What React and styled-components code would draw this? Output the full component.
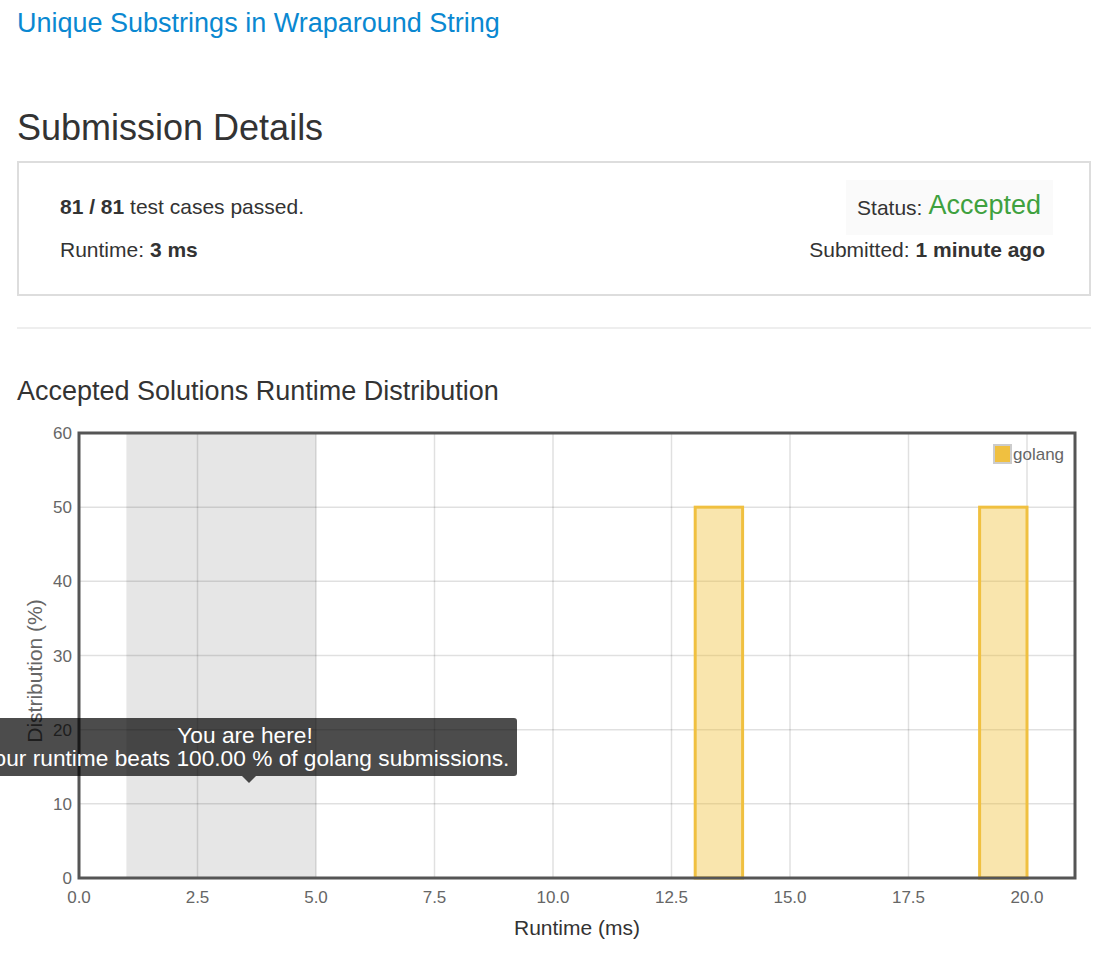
import React from "react";
import styled, { createGlobalStyle } from "styled-components";

const GlobalStyle = createGlobalStyle`
  body {
    margin: 0;
    background: #fff;
    color: #333;
    font-family: "Liberation Sans", Arial, sans-serif;
  }
`;

const Page = styled.div`
  padding: 0 17px;
  width: 1074px;
`;

const TitleLink = styled.a`
  display: block;
  padding-top: 6px;
  font-size: 27px;
  line-height: 34px;
  color: #0a88d1;
  text-decoration: none;
`;

const Heading = styled.h2`
  margin: 66px 0 11px;
  font-size: 36px;
  font-weight: 400;
  line-height: 44px;
`;

const Panel = styled.div`
  display: flex;
  justify-content: space-between;
  border: 2px solid #ddd;
  height: 131px;
  padding: 0 44px 0 41px;
`;

const Col = styled.div`
  display: flex;
  flex-direction: column;
  align-items: ${(p) => (p.right ? "flex-end" : "flex-start")};
  padding-top: ${(p) => (p.right ? "17px" : "32px")};
`;

const Line = styled.div`
  font-size: 21px;
  line-height: 24px;
  margin-bottom: ${(p) => p.gap || "0"};
  b { font-weight: 700; }
`;

const StatusBox = styled.div`
  background: #fafafa;
  padding: 0 12px 0 11px;
  margin-right: -8px;
  height: 55px;
  display: flex;
  align-items: center;
  font-size: 21px;
  margin-bottom: 3px;
`;

const Accepted = styled.span`
  color: #3fa13f;
  font-size: 27px;
  margin-left: 6px;
  position: relative;
  top: -2px;
`;

const Divider = styled.hr`
  border: none;
  border-top: 2px solid #eee;
  margin: 31px 0 0;
`;

const ChartTitle = styled.h3`
  margin: 45px 0 0;
  font-size: 27px;
  font-weight: 400;
  line-height: 34px;
`;

const ChartWrap = styled.div`
  position: relative;
  margin-top: 8px;
  height: 538px;
  svg { display: block; }
`;

const Tooltip = styled.div`
  position: absolute;
  left: -44px;
  top: 302px;
  width: 544px;
  height: 58px;
  background: rgba(0, 0, 0, 0.7);
  border-radius: 3px;
  color: #fff;
  font-size: 22.7px;
  line-height: 23px;
  text-align: center;
  padding-top: 6px;
  box-sizing: border-box;
  white-space: nowrap;
  &::after {
    content: "";
    position: absolute;
    left: 269px;
    bottom: -7px;
    border-left: 7px solid transparent;
    border-right: 7px solid transparent;
    border-top: 7px solid rgba(0, 0, 0, 0.7);
  }
`;

const X0 = 79;
const X20 = 1027;
const Y0 = 877;
const Y60 = 432;
const xs = (v) => X0 + ((X20 - X0) * v) / 20;
const ys = (v) => Y0 - ((Y0 - Y60) * v) / 60;

const xTicks = [0, 2.5, 5, 7.5, 10, 12.5, 15, 17.5, 20];
const yTicks = [0, 10, 20, 30, 40, 50, 60];
const bars = [
  { from: 13, to: 14, value: 50 },
  { from: 19, to: 20, value: 50 },
];

const Chart = () => (
  <svg width="1074" height="538" viewBox="17 415 1074 538" fontFamily="Liberation Sans, Arial, sans-serif">
    <rect x={xs(1)} y={Y60} width={xs(5) - xs(1)} height={Y0 - Y60} fill="#e6e6e6" />
    {xTicks.slice(1).map((t) => (
      <line key={t} x1={xs(t)} x2={xs(t)} y1={Y60} y2={Y0} stroke="rgba(0,0,0,0.12)" strokeWidth="1.5" />
    ))}
    {yTicks.slice(1).map((t) => (
      <line key={t} x1={X0} x2={1075} y1={ys(t)} y2={ys(t)} stroke="rgba(0,0,0,0.12)" strokeWidth="1.5" />
    ))}
    {bars.map((b) => (
      <rect
        key={b.from}
        x={xs(b.from)}
        y={ys(b.value)}
        width={xs(b.to) - xs(b.from)}
        height={Y0 - ys(b.value)}
        fill="rgba(240,190,50,0.4)"
        stroke="#f0c040"
        strokeWidth="3"
      />
    ))}
    <rect x={X0} y={Y60} width={1075 - X0} height={Y0 - Y60} fill="none" stroke="#555" strokeWidth="3" />
    {yTicks.map((t) => (
      <text key={t} x={72} y={ys(t) + 6} textAnchor="end" fontSize="17" fill="#666">
        {t}
      </text>
    ))}
    {xTicks.map((t) => (
      <text key={t} x={xs(t)} y={902} textAnchor="middle" fontSize="17" fill="#666">
        {t.toFixed(1)}
      </text>
    ))}
    <text x={577} y={934} textAnchor="middle" fontSize="21" fill="#333">
      Runtime (ms)
    </text>
    <text transform="translate(42 670) rotate(-90)" textAnchor="middle" fontSize="21" fill="#666">
      Distribution (%)
    </text>
    <rect x={994} y={444} width={17} height={18} fill="#f0c040" stroke="#ccc" strokeWidth="2" />
    <text x={1013} y={459} fontSize="17" fill="#666">
      golang
    </text>
  </svg>
);

export default function App() {
  return (
    <>
      <GlobalStyle />
      <Page>
        <TitleLink href="#">Unique Substrings in Wraparound String</TitleLink>
        <Heading>Submission Details</Heading>
        <Panel>
          <Col>
            <Line gap="19px">
              <b>81 / 81</b> test cases passed.
            </Line>
            <Line>
              Runtime: <b>3 ms</b>
            </Line>
          </Col>
          <Col right>
            <StatusBox>
              Status:<Accepted>Accepted</Accepted>
            </StatusBox>
            <Line>
              Submitted: <b>1 minute ago</b>
            </Line>
          </Col>
        </Panel>
        <Divider />
        <ChartTitle>Accepted Solutions Runtime Distribution</ChartTitle>
        <ChartWrap>
          <Chart />
          <Tooltip>
            You are here!
            <br />
            Your runtime beats 100.00 % of golang submissions.
          </Tooltip>
        </ChartWrap>
      </Page>
    </>
  );
}
